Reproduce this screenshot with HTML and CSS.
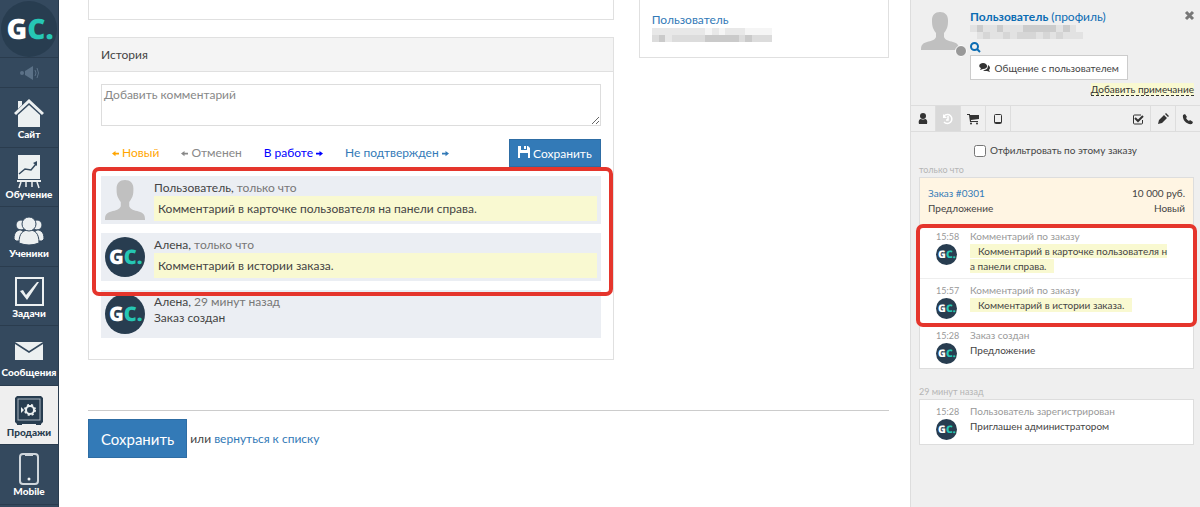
FILE: index.html
```html
<!DOCTYPE html>
<html lang="ru">
<head>
    <meta charset="UTF-8">
    <meta name="viewport" content="width=device-width, initial-scale=1.0">
    <title>Заказ #0301</title>
    <link rel="stylesheet" href="styles.css">
</head>
<body>
    <!-- Общие иконки -->
    <svg class="sprite" aria-hidden="true">
        <symbol id="gc" viewBox="0 0 40 40" overflow="visible">
            <circle cx="20" cy="20" r="20" fill="#283d50"/>
            <text x="4" y="27" class="gc-text" fill="#fff">G<tspan fill="#26c6b4">C.</tspan></text>
        </symbol>
        <symbol id="person" viewBox="0 0 38 38">
            <path fill="#c0c0c0" d="M19 0c5 0 8 3 8 8 0 3 0 5-1 8-1 2-2 4-3 5v4c1 3 5 4 9 5 4 1 6 3 6 7v1H0v-1c0-4 2-6 6-7 4-1 8-2 9-5v-4c-1-1-2-3-3-5-1-3-1-5-1-8 0-5 3-8 8-8z"/>
        </symbol>
        <symbol id="arrow" viewBox="0 0 8 8">
            <path fill="currentColor" d="M0 3h4V1l4 3-4 3V5H0z"/>
        </symbol>
    </svg>

    <div class="page">
        <nav class="sidebar">
            <a href="#" class="logo"><svg width="58" height="56" aria-label="GC"><use href="#gc"/></svg></a>
            <a href="#" class="news" aria-label="Новости">
                <svg width="20" height="14" viewBox="0 0 20 14" fill="#5b7187"><circle cx="3" cy="7" r="2"/><path d="M6 5l8-5v14L6 9z"/><path d="M16 4q2 3 0 6M18 2q3 5 0 10" fill="none" stroke="#5b7187"/></svg>
            </a>
            <a href="#" class="item">
                <svg width="34" height="34" fill="#ecf0f1"><path d="M6 7h4v4l-4 4z"/><path d="M17 5l15 14-2 2L17 9 4 21l-2-2z"/><path d="M17 11l11 10v12H6V21z"/></svg>
                <span>Сайт</span>
            </a>
            <a href="#" class="item">
                <svg width="34" height="34"><path fill="#ecf0f1" d="M6 1h22v24H6zM5 26h24v2H5z"/><path d="M9 28l-2 6M14 28v5M20 28v5M25 28l2 6" stroke="#ecf0f1" stroke-width="1.5"/><path d="M7 20l6-5 6 1 5-6" fill="none" stroke="#34495e" stroke-width="1.5"/><path d="M21 9l4-2v5z" fill="#34495e"/></svg>
                <span>Обучение</span>
            </a>
            <a href="#" class="item">
                <svg width="34" height="34" fill="#ecf0f1" stroke="#34495e"><circle cx="9" cy="12" r="5"/><circle cx="25" cy="12" r="5"/><path d="M2 26c0-7 3-9 7-9l6 4v7H4zM32 26c0-7-3-9-7-9l-6 4v7h11z"/><path d="M7 30c0-10 4-13 10-13s10 3 10 13q-10 4-20 0z"/><circle cx="17" cy="11" r="7"/></svg>
                <span>Ученики</span>
            </a>
            <a href="#" class="item">
                <svg width="34" height="34"><rect x="4" y="5" width="27" height="27" fill="none" stroke="#ecf0f1" stroke-width="2"/><path fill="#ecf0f1" d="M8 18l3-1 3 5L25 9h2L15 27z"/></svg>
                <span>Задачи</span>
            </a>
            <a href="#" class="item">
                <svg width="34" height="34" fill="#ecf0f1"><path d="M3 10h28L17 19z"/><path d="M3 12l14 9 14-9v16H3z"/></svg>
                <span>Сообщения</span>
            </a>
            <a href="#" class="item active">
                <svg width="34" height="34" fill="none"><path fill="#283d50" d="M5 4h24l2 2v24l-2 2v1h-5v-1H10v1H5v-1l-2-2V6z"/><rect x="6" y="7" width="22" height="21" stroke="#a8b3bd"/><circle cx="18" cy="18" r="4" stroke="#ecf0f1" stroke-width="2"/><circle cx="18" cy="18" r="5" stroke="#ecf0f1" stroke-width="2" stroke-dasharray="2 2"/><path fill="#ecf0f1" d="M9 15l3 3-3 3z"/></svg>
                <span>Продажи</span>
            </a>
            <a href="#" class="item">
                <svg width="34" height="34" fill="none"><rect x="8" y="3" width="18" height="30" rx="3" stroke="#cfd6dc" stroke-width="2"/><path d="M13 3h8v2h-8z" fill="#cfd6dc"/><circle cx="17" cy="28" r="1.5" fill="#ecf0f1"/></svg>
                <span>Mobile</span>
            </a>
        </nav>

        <main class="content">
            <div class="columns">
                <div class="col-main">
                    <div class="box box-cut"></div>

                    <section class="box history">
                        <h2>История</h2>
                        <div class="history-body">
                            <textarea class="comment" aria-label="Комментарий" placeholder="Добавить комментарий"></textarea>
                            <div class="actions">
                                <a href="#" class="st-new"><svg class="arrow back"><use href="#arrow"/></svg> Новый</a>
                                <a href="#" class="st-cancel"><svg class="arrow back"><use href="#arrow"/></svg> Отменен</a>
                                <a href="#" class="st-work">В работе <svg class="arrow"><use href="#arrow"/></svg></a>
                                <a href="#" class="st-wait">Не подтвержден <svg class="arrow"><use href="#arrow"/></svg></a>
                                <button type="button" class="btn save">
                                    <svg width="12" height="12" fill="#fff"><path fill-rule="evenodd" d="M0 0h3v4h6V0h1l2 2v10h-2V7H2v5H0zM6 0h2v3H6z"/></svg>
                                    Сохранить
                                </button>
                            </div>
                            <div class="feed">
                                <div class="entry">
                                    <svg class="avatar"><use href="#person"/></svg>
                                    <div class="entry-text">
                                        <div class="who">Пользователь, <span>только что</span></div>
                                        <div class="note">Комментарий в карточке пользователя на панели справа.</div>
                                    </div>
                                </div>
                                <div class="entry">
                                    <svg class="avatar"><use href="#gc"/></svg>
                                    <div class="entry-text">
                                        <div class="who">Алена, <span>только что</span></div>
                                        <div class="note">Комментарий в истории заказа.</div>
                                    </div>
                                </div>
                                <div class="entry">
                                    <svg class="avatar"><use href="#gc"/></svg>
                                    <div class="entry-text">
                                        <div class="who">Алена, <span>29 минут назад</span></div>
                                        <div>Заказ создан</div>
                                    </div>
                                </div>
                                <div class="frame frame-feed"></div>
                            </div>
                        </div>
                    </section>
                </div>

                <aside class="box user-box">
                    <a href="#">Пользователь</a>
                    <svg class="masked" width="120" height="14" viewBox="0 0 18 2" preserveAspectRatio="none" shape-rendering="crispEdges">
                        <path fill="#e8e8e8" d="M0 0h18v2H0z"/>
                        <path fill="#f5f5f5" d="M8 0h1v1H8zM10 0h1v1h-1zM14 0h4v1h-4z"/>
                        <path fill="#dcdcdc" d="M0 1h2v1H0zM3 1h5v1H3zM13 1h5v1h-5z"/>
                        <path fill="#cacaca" d="M1 1h1v1H1zM8 1h5v1H8zM14 1h1v1h-1z"/>
                    </svg>
                </aside>
            </div>

            <div class="footer">
                <button type="button" class="btn btn-lg">Сохранить</button>
                <span>или <a href="#">вернуться к списку</a></span>
            </div>
        </main>

        <aside class="panel">
            <header class="profile">
                <div class="photo">
                    <svg width="38" height="38"><use href="#person"/></svg>
                    <i class="status"></i>
                </div>
                <div class="profile-info">
                    <div class="profile-name"><a href="#"><b>Пользователь</b> (профиль)</a></div>
                    <svg class="masked" width="113" height="14" viewBox="0 0 17 2" preserveAspectRatio="none" shape-rendering="crispEdges">
                        <path fill="#e2e2e2" d="M0 0h16v1H0zM1 1h16v1H1z"/>
                        <path fill="#cccccc" d="M1 0h1v1H1zM4 0h1v1H4zM8 0h5v1H8zM14 0h1v1h-1z"/>
                        <path fill="#d6d6d6" d="M2 1h1v1H2zM5 1h1v1H5zM7 1h3v1H7zM11 1h1v1h-1zM13 1h1v1h-1z"/>
                    </svg>
                    <a href="#" class="search" aria-label="Поиск"><svg width="10" height="11" fill="none" stroke="#0b6cb3" stroke-width="2"><circle cx="4.500" cy="4.500" r="3.500"/><path d="M7 7l3 3"/></svg></a>
                    <button type="button" class="btn-chat">
                        <svg width="11" height="9" fill="#333"><path d="M4 0c5 0 6 6 0 6L1 7l1-2C-1 4 0 0 4 0z"/><path d="M9 2c3 2 2 4 1 5l1 2-3-1c-2 0-3 0-4-1 4 0 5-2 5-5z"/></svg>
                        Общение с пользователем
                    </button>
                </div>
                <button type="button" class="close" aria-label="Закрыть"><svg width="9" height="9" stroke="#777" stroke-width="3"><path d="M1 1l7 7M8 1L1 8"/></svg></button>
                <a href="#" class="add-note">Добавить примечание</a>
            </header>

            <div class="tabs">
                <button type="button" aria-label="Профиль"><svg width="12" height="12" fill="#333"><circle cx="6" cy="3" r="3"/><path d="M2 11c-1-4 1-5 2-5q2 1 4 0c1 0 3 1 2 5z"/></svg></button>
                <button type="button" class="current" aria-label="История"><svg width="12" height="12" fill="none" stroke="#fff" stroke-width="1.500"><path d="M2 3a4.500 4.500 0 1 1 0 6M6 3v4H4"/><path d="M1 1v4h4z" fill="#fff" stroke="none"/></svg></button>
                <button type="button" aria-label="Заказы"><svg width="12" height="12" fill="#333"><path d="M0 1h3v1h9v4L4 7v1h7v1H3L2 2H0z"/><circle cx="4" cy="10.500" r="1"/><circle cx="10" cy="10.500" r="1"/></svg></button>
                <button type="button" aria-label="Устройства"><svg width="12" height="12" fill="none" stroke="#333"><rect x="2.500" y="1.500" width="7" height="9" rx="1"/><path d="M3 9.500h6"/></svg></button>
                <span class="spacer"></span>
                <button type="button" aria-label="Задача"><svg width="12" height="12" fill="none" stroke="#333"><path d="M10.500 7v3q0 1-1 1h-7q-1 0-1-1V3q0-1 1-1H9"/><path d="M3 5l3 3 5-5" stroke-width="2"/></svg></button>
                <button type="button" aria-label="Редактировать"><svg width="12" height="12" fill="#333"><path d="M1 11l1-4 5-5 3 3-5 5zM8 1l1-1 3 3-1 1z"/></svg></button>
                <button type="button" aria-label="Позвонить"><svg width="12" height="12" fill="#333"><path d="M1 2l2-1 2 3-1 1q1 2 3 3l1-1 3 2-1 2C5 12 0 7 1 2z"/></svg></button>
            </div>

            <label class="filter"><input type="checkbox"> Отфильтровать по этому заказу</label>

            <div class="period">только что</div>
            <div class="card">
                <div class="order">
                    <div><a href="#">Заказ #0301</a><span>10 000 руб.</span></div>
                    <div><span>Предложение</span><span>Новый</span></div>
                </div>
                <div class="events">
                    <div class="event">
                        <div class="time">15:58<svg class="mini"><use href="#gc"/></svg></div>
                        <div class="event-text">
                            <div class="type">Комментарий по заказу</div>
                            <mark>Комментарий в карточке пользователя на панели справа.</mark>
                        </div>
                    </div>
                    <div class="event">
                        <div class="time">15:57<svg class="mini"><use href="#gc"/></svg></div>
                        <div class="event-text">
                            <div class="type">Комментарий по заказу</div>
                            <mark>Комментарий в истории заказа.</mark>
                        </div>
                    </div>
                    <div class="frame frame-events"></div>
                </div>
                <div class="event">
                    <div class="time">15:28<svg class="mini"><use href="#gc"/></svg></div>
                    <div class="event-text">
                        <div class="type">Заказ создан</div>
                        Предложение
                    </div>
                </div>
            </div>

            <div class="period older">29 минут назад</div>
            <div class="card">
                <div class="event">
                    <div class="time">15:28<svg class="mini"><use href="#gc"/></svg></div>
                    <div class="event-text">
                        <div class="type">Пользователь зарегистрирован</div>
                        Приглашен администратором
                    </div>
                </div>
            </div>
        </aside>
    </div>
</body>
</html>
```
FILE: styles.css
```css
* {
    box-sizing: border-box;
}
body {
    margin: 0;
    font-family: Lato, Roboto, sans-serif;
    font-size: 12px;
    line-height: 16px;
    color: #444;
    background-color: #fff;
}
a {
    color: #337ab7;
    text-decoration: none;
}
button, input, textarea {
    font-family: inherit;
}
button {
    cursor: pointer;
}
svg {
    flex: none;
    overflow: visible;
}
.sprite {
    display: none;
}
.gc-text {
    font-family: "Open Sans", sans-serif;
    font-size: 20px;
    font-weight: 800;
    text-rendering: geometricPrecision;
}
.page {
    display: flex;
    min-height: 100vh;
}

/* Левое меню */
.sidebar {
    width: 59px;
    flex: none;
    background-color: #34495e;
    border-right: 1px solid #2a3c4e;
}
.sidebar a {
    display: flex;
    align-items: center;
    border-bottom: 1px solid #2a3c4e;
}
.sidebar .logo {
    height: 58px;
}
.sidebar .news {
    height: 30px;
    justify-content: center;
}
.sidebar .item {
    flex-direction: column;
    height: 59px;
    padding-top: 6px;
    color: #fff;
    font-size: 10px;
    font-weight: 900;
    line-height: 12px;
}
.sidebar .item:nth-child(odd) {
    height: 60px;
}
.sidebar .active {
    background-color: #efefef;
    color: #283d50;
}

/* Основная часть */
.content {
    flex: 1;
    padding: 0 21px 0 29px;
}
.columns {
    display: grid;
    grid-template-columns: 21fr 10fr;
    gap: 25px;
    align-items: start;
}
.box {
    border: 1px solid #e0e0e0;
}
.box-cut {
    height: 20px;
    border-top: none;
}
.history {
    margin-top: 17px;
}
.history h2 {
    margin: 0;
    padding: 8px 12px;
    font-size: 12px;
    font-weight: normal;
    line-height: 17px;
    background-color: #f4f4f4;
    border-bottom: 1px solid #e0e0e0;
}
.history-body {
    padding: 12px 12px 21px;
}
.comment {
    display: block;
    width: 100%;
    height: 42px;
    padding: 2px;
    border: 1px solid #ddd;
    font-size: 12px;
    line-height: 16px;
}
.comment::placeholder {
    color: #888;
}
.actions {
    display: flex;
    align-items: center;
    gap: 22px;
    margin-top: 13px;
    padding-left: 11px;
}
.arrow {
    width: 7px;
    height: 7px;
}
.back {
    transform: rotate(180deg);
}
.st-new {
    color: #ffa500;
}
.st-cancel {
    color: #888;
}
.st-work {
    color: #00f;
}
.btn {
    border: 1px solid #2e6da4;
    background-color: #337ab7;
    color: #fff;
}
.btn:hover {
    background-color: #286090;
}
.save {
    height: 28px;
    margin-left: auto;
    padding: 0 8px;
    font-size: 12px;
}
.feed {
    position: relative;
    display: flex;
    flex-direction: column;
    gap: 9px;
    margin-top: 9px;
}
.entry {
    display: flex;
    gap: 9px;
    min-height: 48px;
    padding: 4px 4px 3px;
    background-color: #ebeef3;
}
.avatar {
    width: 40px;
    height: 40px;
}
.entry-text {
    flex: 1;
}
.who span {
    color: #777;
}
.note {
    padding: 4px;
    line-height: 17px;
    background-color: #f9f9d1;
}
.frame {
    position: absolute;
    border: 4px solid #e5352c;
    border-radius: 7px;
    pointer-events: none;
}
.frame-feed {
    top: -9px;
    left: -9px;
    right: -12px;
    height: 129px;
}
.user-box {
    padding: 12px 12px 15px;
    border-top: none;
}
.masked {
    display: block;
}
.footer {
    display: flex;
    align-items: center;
    gap: 3px;
    margin-top: 50px;
    padding-top: 8px;
    border-top: 1px solid #ccc;
}
.btn-lg {
    height: 39px;
    padding: 0 12px;
    font-size: 15px;
}

/* Правая панель */
.panel {
    width: 290px;
    flex: none;
    background-color: #efefef;
    border-left: 1px solid #ddd;
    font-size: 10px;
    line-height: 15px;
}
.profile {
    display: flex;
    flex-wrap: wrap;
    padding: 9px 6px;
}
.photo {
    position: relative;
    width: 50px;
    padding: 3px 0 0 4px;
}
.status {
    position: absolute;
    top: 36px;
    left: 38px;
    width: 12px;
    height: 12px;
    border: 1px solid #fff;
    border-radius: 50%;
    background-color: #999;
}
.profile-info {
    flex: 1;
    padding-left: 3px;
}
.profile-name {
    font-size: 12px;
    line-height: 16px;
}
.profile-name a {
    color: #0b6cb3;
}
.search {
    display: flex;
    height: 16px;
    align-items: center;
}
.btn-chat {
    height: 25px;
    padding: 0 8px;
    border: 1px solid #ccc;
    background-color: #fff;
    color: #444;
    font-size: 10px;
}
.btn-chat svg {
    margin-right: 2px;
}
.close {
    align-self: flex-start;
    padding: 0;
    border: none;
    background: none;
    line-height: 12px;
}
.add-note {
    margin: 3px 0 0 auto;
    color: #333;
    line-height: 12px;
    background-color: #f9f9d1;
    border-bottom: 1px dashed #333;
}
.tabs {
    display: flex;
    border-top: 1px solid #ddd;
    border-bottom: 1px solid #ddd;
}
.tabs button {
    display: flex;
    align-items: center;
    justify-content: center;
    width: 25px;
    height: 25px;
    padding: 0;
    border: none;
    border-right: 1px solid #ddd;
    background: none;
}
.tabs .spacer ~ button {
    border-right: none;
    border-left: 1px solid #ddd;
}
.tabs .spacer + button {
    border-left: none;
}
.tabs .current {
    background-color: #d9d9d9;
}
.tabs .spacer {
    flex: 1;
}
.filter {
    display: flex;
    align-items: center;
    justify-content: center;
    gap: 4px;
    padding-top: 11px;
}
.filter input {
    width: 12px;
    height: 12px;
    margin: 0;
}
.period {
    margin: 4px 8px 0;
    color: #b5b5b5;
    font-size: 9px;
}
.older {
    margin-top: 15px;
}
.card {
    margin: 0 6px 0 8px;
    border: 1px solid #ddd;
    background-color: #fff;
}
.order {
    padding: 8px 8px 9px;
    background-color: #fff5e3;
}
.order div {
    display: flex;
    justify-content: space-between;
}
.events {
    position: relative;
    border-bottom: 1px solid #eee;
}
.event {
    display: flex;
    padding: 4px 22px 4px 16px;
}
.event + .event {
    border-top: 1px solid #eee;
}
.time {
    width: 34px;
    color: #999;
    font-size: 9px;
}
.mini {
    display: block;
    width: 21px;
    height: 21px;
}
.event-text {
    flex: 1;
    word-break: break-all;
}
.type {
    color: #999;
}
mark {
    padding: 1px 8px;
    color: #444;
    background-color: #f9f9d1;
}
.frame-events {
    top: -1px;
    right: -4px;
    bottom: -4px;
    left: -4px;
}
```
